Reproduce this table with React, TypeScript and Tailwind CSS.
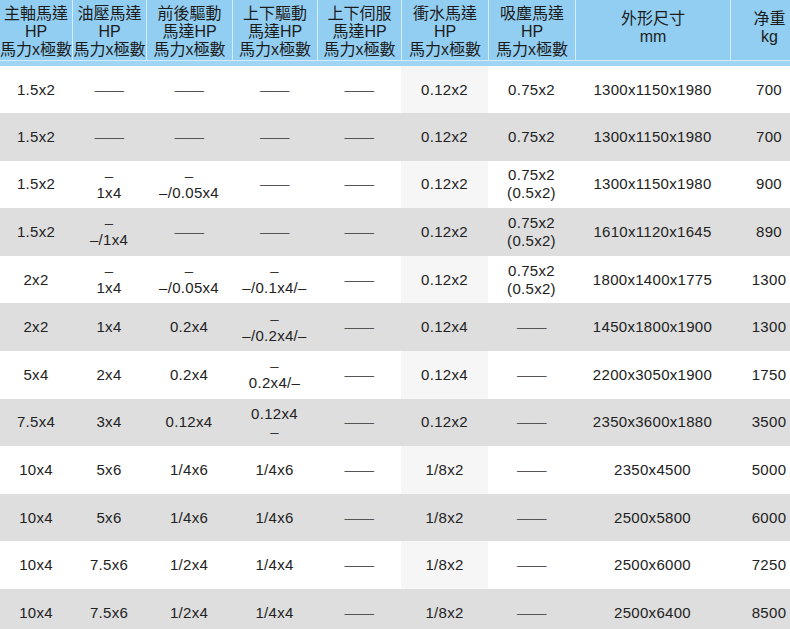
import React from "react";

const cols = "grid grid-cols-[72px_74px_86px_85px_84px_87px_87px_155px_78px] w-[808px]";

const headers: string[][] = [
  ["主軸馬達", "HP", "馬力x極數"],
  ["油壓馬達", "HP", "馬力x極數"],
  ["前後驅動", "馬達HP", "馬力x極數"],
  ["上下驅動", "馬達HP", "馬力x極數"],
  ["上下伺服", "馬達HP", "馬力x極數"],
  ["衝水馬達", "HP", "馬力x極數"],
  ["吸塵馬達", "HP", "馬力x極數"],
  ["外形尺寸", "mm"],
  ["净重", "kg"],
];

const D = "——";

const rows: string[][][] = [
  [["1.5x2"], [D], [D], [D], [D], ["0.12x2"], ["0.75x2"], ["1300x1150x1980"], ["700"]],
  [["1.5x2"], [D], [D], [D], [D], ["0.12x2"], ["0.75x2"], ["1300x1150x1980"], ["700"]],
  [["1.5x2"], ["–", "1x4"], ["–", "–/0.05x4"], [D], [D], ["0.12x2"], ["0.75x2", "(0.5x2)"], ["1300x1150x1980"], ["900"]],
  [["1.5x2"], ["–", "–/1x4"], [D], [D], [D], ["0.12x2"], ["0.75x2", "(0.5x2)"], ["1610x1120x1645"], ["890"]],
  [["2x2"], ["–", "1x4"], ["–", "–/0.05x4"], ["–", "–/0.1x4/–"], [D], ["0.12x2"], ["0.75x2", "(0.5x2)"], ["1800x1400x1775"], ["1300"]],
  [["2x2"], ["1x4"], ["0.2x4"], ["–", "–/0.2x4/–"], [D], ["0.12x4"], [D], ["1450x1800x1900"], ["1300"]],
  [["5x4"], ["2x4"], ["0.2x4"], ["–", "0.2x4/–"], [D], ["0.12x4"], [D], ["2200x3050x1900"], ["1750"]],
  [["7.5x4"], ["3x4"], ["0.12x4"], ["0.12x4", "–"], [D], ["0.12x2"], [D], ["2350x3600x1880"], ["3500"]],
  [["10x4"], ["5x6"], ["1/4x6"], ["1/4x6"], [D], ["1/8x2"], [D], ["2350x4500"], ["5000"]],
  [["10x4"], ["5x6"], ["1/4x6"], ["1/4x6"], [D], ["1/8x2"], [D], ["2500x5800"], ["6000"]],
  [["10x4"], ["7.5x6"], ["1/2x4"], ["1/4x4"], [D], ["1/8x2"], [D], ["2500x6000"], ["7250"]],
  [["10x4"], ["7.5x6"], ["1/2x4"], ["1/4x4"], [D], ["1/8x2"], [D], ["2500x6400"], ["8500"]],
];

export default function App() {
  return (
    <div
      className="w-[790px] h-[629px] overflow-hidden bg-white text-[#222]"
      style={{ fontFamily: '"Liberation Sans", Arial, "Noto Sans CJK TC", sans-serif' }}
    >
      <div className="w-[808px]">
        <div className={`${cols} h-[60px] bg-[#92cef2]`}>
          {headers.map((h, i) => (
            <div
              key={i}
              className={`flex flex-col items-center text-[16px] leading-[18px] text-[#1c1c1c] whitespace-nowrap ${
                i > 0 ? "border-l border-[#d6edfb]" : ""
              } ${h.length === 2 ? "justify-center pb-[4px]" : "pt-[5px]"}`}
            >
              {h.map((t, j) => (
                <span key={j}>{t}</span>
              ))}
            </div>
          ))}
        </div>
        <div className="h-px bg-[#d3ecfb]" />
        <div className="h-[5px] bg-[#9fd4f4]" />
        {rows.map((r, ri) => {
          const gray = ri % 2 === 1;
          return (
            <div
              key={ri}
              className={`${cols} ${ri === 0 ? "h-[47px]" : "h-[47.6px]"} ${gray ? "bg-[#dedede]" : "bg-white"}`}
            >
              {r.map((c, ci) => (
                <div
                  key={ci}
                  className={`flex flex-col items-center justify-center text-[15px] leading-[18px] tracking-[0.3px] whitespace-nowrap ${
                    ci === 5 && !gray ? "bg-[#f6f6f6]" : ""
                  }`}
                >
                  {c.map((t, j) =>
                    t === D ? (
                      <span key={j} className="text-[#555] text-[15px] tracking-[-0.6px]">
                        {t}
                      </span>
                    ) : (
                      <span key={j} className={t === "–" ? "leading-[17px] text-[#333]" : ""}>
                        {t}
                      </span>
                    )
                  )}
                </div>
              ))}
            </div>
          );
        })}
      </div>
    </div>
  );
}
